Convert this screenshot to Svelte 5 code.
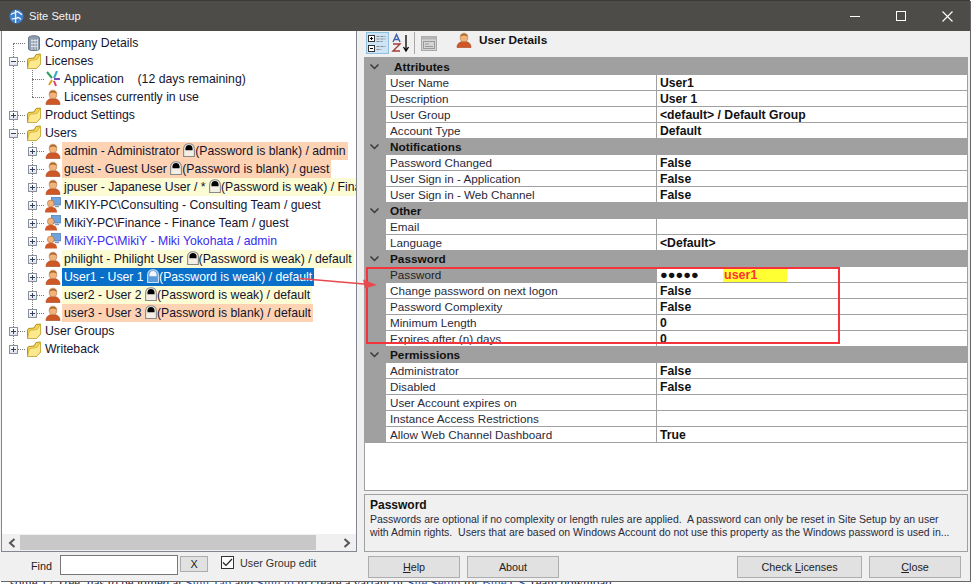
<script>
  const tree = [
    { d: 0, box: '', icon: 'db', t: 'Company Details' },
    { d: 0, box: 'm', icon: 'folder', t: 'Licenses' },
    { d: 1, box: '', icon: 'app', t: 'Application    (12 days remaining)' },
    { d: 1, box: '', icon: 'user', t: 'Licenses currently in use' },
    { d: 0, box: 'p', icon: 'folder', t: 'Product Settings' },
    { d: 0, box: 'm', icon: 'folder', t: 'Users' },
    { d: 1, box: 'p', icon: 'user', a: 'admin - Administrator ', b: '(Password is blank) / admin', c: 'blank' },
    { d: 1, box: 'p', icon: 'user', a: 'guest - Guest User ', b: '(Password is blank) / guest', c: 'blank' },
    { d: 1, box: 'p', icon: 'user', a: 'jpuser - Japanese User / * ', b: '(Password is weak) / Finance Team', c: 'weak' },
    { d: 1, box: 'p', icon: 'win', t: 'MIKIY-PC\\Consulting - Consulting Team / guest' },
    { d: 1, box: 'p', icon: 'win', t: 'MikiY-PC\\Finance - Finance Team / guest' },
    { d: 1, box: 'p', icon: 'win', t: 'MikiY-PC\\MikiY - Miki Yokohata / admin', c: 'self' },
    { d: 1, box: 'p', icon: 'user', a: 'philight - Philight User ', b: '(Password is weak) / default', c: 'weak' },
    { d: 1, box: 'p', icon: 'user', a: 'User1 - User 1 ', b: '(Password is weak) / default', c: 'sel' },
    { d: 1, box: 'p', icon: 'user', a: 'user2 - User 2 ', b: '(Password is weak) / default', c: 'weak' },
    { d: 1, box: 'p', icon: 'user', a: 'user3 - User 3 ', b: '(Password is blank) / default', c: 'blank' },
    { d: 0, box: 'p', icon: 'folder', t: 'User Groups' },
    { d: 0, box: 'p', icon: 'folder', t: 'Writeback' }
  ];
  const sections = [
    { name: 'Attributes', rows: [['User Name', 'User1'], ['Description', 'User 1'], ['User Group', '<default> / Default Group'], ['Account Type', 'Default']] },
    { name: 'Notifications', rows: [['Password Changed', 'False'], ['User Sign in - Application', 'False'], ['User Sign in - Web Channel', 'False']] },
    { name: 'Other', rows: [['Email', ''], ['Language', '<Default>']] },
    { name: 'Password', rows: [['Password', '●●●●●'], ['Change password on next logon', 'False'], ['Password Complexity', 'False'], ['Minimum Length', '0'], ['Expires after (n) days', '0']] },
    { name: 'Permissions', rows: [['Administrator', 'False'], ['Disabled', 'False'], ['User Account expires on', ''], ['Instance Access Restrictions', ''], ['Allow Web Channel Dashboard', 'True']] }
  ];
</script>

{#snippet icon(kind)}
  {#if kind === 'folder'}
    <svg class="ic" viewBox="0 0 16 16"><path d="M1.500 7 L1.500 15.500 L10.500 15.500 L14.500 11 L14.500 1 L10 1.500 L8 5 L2.500 5.500Z" fill="#f7d44f" stroke="#a8922f"/><path d="M1.500 15.500 L3.500 7.500 L11 6.500 L14.500 1 L14.500 11 L10.500 15.500Z" fill="#fbe88f" stroke="#c9aa3a" stroke-width=".7"/></svg>
  {:else if kind === 'db'}
    <svg class="ic" viewBox="0 0 16 16"><path d="M2.500 3 C2.500 0 13.500 0 13.500 3 L13.500 14 C13.500 16 2.500 16 2.500 14Z" fill="#8f9db0" stroke="#6d7684"/><path d="M5 5.500h7M5 8.500h7M5 11.500h7M6 4v11M9 4v11M11.500 4v11" stroke="#e6eaf0" stroke-width=".8"/></svg>
  {:else if kind === 'app'}
    <svg class="ic" viewBox="0 0 16 16"><path d="M2 1 L7 7" stroke="#2e9e5a" stroke-width="2"/><path d="M12 0 L9 7" stroke="#36a8c8" stroke-width="2"/><path d="M9 8 H15" stroke="#7a4bb0" stroke-width="2"/><path d="M7 9 L4 14" stroke="#e0a020" stroke-width="2"/><path d="M9 10 L11 15" stroke="#e03a6a" stroke-width="2"/></svg>
  {:else if kind === 'user'}
    <svg class="ic" viewBox="0 0 16 16"><path d="M1 15.500 C1 10.500 5 9.500 8 9.500 C11 9.500 15 10.500 15 15.500Z" fill="#cf5726" stroke="#a5411e" stroke-width=".6"/><ellipse cx="8" cy="5.500" rx="3.800" ry="4.300" fill="#f2b37a" stroke="#b0763f" stroke-width=".6"/><path d="M4.200 5 C4.500 0.500 11.500 0.500 11.800 5 C10 3 6 3 4.200 5Z" fill="#a8662a"/></svg>
  {:else if kind === 'win'}
    <svg class="ic" viewBox="0 0 16 16"><rect x="6.500" y="0.500" width="9" height="7.500" fill="#6ea3e0" stroke="#4a76ad" stroke-width=".7"/><path d="M10 9.500h4" stroke="#8b95a5" stroke-width="1.400"/><path d="M0 15.500 C0 11 3 10 6 10 C9 10 12 11 12 15.500Z" fill="#cf5726"/><circle cx="5.800" cy="6.500" r="3.400" fill="#f2b37a" stroke="#a8662a" stroke-width=".6"/></svg>
  {/if}
{/snippet}

{#snippet lock()}
  <svg class="lock" viewBox="0 0 11 13"><path class="lk-body" d="M0.500 12.500 V5.500 C0.500 -1 10.500 -1 10.500 5.500 V12.500Z"/><path class="lk-dome" d="M2.200 6.800 V5 C2.200 0.800 8.800 0.800 8.800 5 V6.800Z"/></svg>
{/snippet}

<div class="window">
  <header class="titlebar">
    <svg class="globe" viewBox="0 0 16 16"><circle cx="8" cy="8" r="7.500" fill="#3f7fc9"/><path d="M2 6 C5 3 7 5 8 3 C10 2 11 5 14 6 M3 11 C5 9 8 12 9 9 C11 9 12 11 13 11 M7 1 V15" stroke="#eaf2fb" stroke-width="1.400" fill="none"/></svg>
    <span class="title">Site Setup</span>
    <div class="controls">
      <span class="ctl"><i class="min"></i></span>
      <span class="ctl"><i class="max"></i></span>
      <span class="ctl"><svg width="11" height="11" viewBox="0 0 11 11"><path d="M0.500 0.500 L10.500 10.500 M10.500 0.500 L0.500 10.500" stroke="#fff" stroke-width="1.100"/></svg></span>
    </div>
  </header>

  <div class="body">
    <div class="main">
      <section class="left">
        <div class="tree">
          <div class="vline root"></div>
          <div class="vline lic"></div>
          <div class="vline usr"></div>
          {#each tree as n}
            <div class="node" class:d1={n.d === 1}>
              <span class="box-slot">
                <span class="hdots"></span>
                {#if n.box}<span class="box">{#if n.box === 'p'}<i class="v"></i>{/if}<i class="h"></i></span>{/if}
              </span>
              {@render icon(n.icon)}
              <span class="label {n.c ?? ''}">{#if n.t}{n.t}{:else}{n.a}{@render lock()}{n.b}{/if}</span>
            </div>
          {/each}
        </div>
        <div class="hscroll">
          <svg width="8" height="10" viewBox="0 0 8 10"><path d="M6.500 1 L2 5 L6.500 9" fill="none" stroke="#555" stroke-width="2"/></svg>
          <span class="track"><span class="thumb"></span></span>
          <svg width="8" height="10" viewBox="0 0 8 10"><path d="M1.500 1 L6 5 L1.500 9" fill="none" stroke="#555" stroke-width="2"/></svg>
        </div>
      </section>

      <section class="right">
        <div class="toolbar">
          <span class="tb active">
            <svg width="21" height="20" viewBox="0 0 21 20"><rect x="1.500" y="2.500" width="6" height="6" fill="#fff" stroke="#333"/><path d="M3 5.500h3M4.500 4v3" stroke="#000"/><rect x="1.500" y="12.500" width="6" height="6" fill="#fff" stroke="#333"/><path d="M3 15.500h3" stroke="#000"/><path d="M9.500 3.500h9M9.500 6h9M9.500 8.500h6M9.500 13.500h9M9.500 16.500h5" stroke="#8a8a8a" stroke-dasharray="3 1"/></svg>
          </span>
          <span class="tb az">
            <svg width="20" height="20" viewBox="0 0 20 20"><path d="M15 2 V17 M12.500 14 L15 18 L17.500 14" fill="none" stroke="#000" stroke-width="1.300"/><path d="M2 9 L5.500 1.500 L9 9 M3.500 6.500 H7.500" fill="none" stroke="#3a5fb0" stroke-width="1.400"/><path d="M2 11 H9 L2 18 H9" fill="none" stroke="#a03a3a" stroke-width="1.400"/></svg>
          </span>
          <span class="sep"></span>
          <span class="tb dim">
            <svg width="16" height="15" viewBox="0 0 16 15"><rect x="0.500" y="0.500" width="15" height="14" fill="#d5d5d5" stroke="#a8a8a8"/><rect x="0.500" y="0.500" width="15" height="3" fill="#b5b5b5"/><rect x="2.500" y="5.500" width="11" height="7" fill="none" stroke="#9a9a9a"/><path d="M4 8h4M4 10.500h8" stroke="#9a9a9a"/></svg>
          </span>
          <span class="tb-user">{@render icon('user')}</span>
          <b class="tb-title">User Details</b>
        </div>

        <div class="grid">
          {#each sections as s}
            <div class="sec">
              <span class="chev"><svg width="9" height="6" viewBox="0 0 9 6"><path d="M0.500 0.500 L4.500 4.500 L8.500 0.500" fill="none" stroke="#3a3a3a" stroke-width="1.500"/></svg></span>
              <b class:indent={s.name === 'Attributes'}>{s.name}</b>
            </div>
            {#each s.rows as r}
              {@const isPw = r[0] === 'Password'}
              <div class="row">
                <span class="key" class:hl={isPw}>{r[0]}</span>
                <span class="val">
                  {#if isPw}
                    <span class="dots">{r[1]}</span><span class="note">user1</span>
                  {:else}{r[1]}{/if}
                </span>
              </div>
            {/each}
          {/each}
        </div>

        <div class="desc">
          <b>Password</b>
          <p>Passwords are optional if no complexity or length rules are applied.&nbsp; A password can only be reset in Site Setup by an user<br />with Admin rights.&nbsp; Users that are based on Windows Account do not use this property as the Windows password is used in...</p>
        </div>
      </section>
    </div>

    <footer class="footer">
      <div class="find">
        <label class="findlbl" for="find">Find</label>
        <input id="find" class="findbox" />
        <button class="x">X</button>
        <span class="check"><svg width="11" height="9" viewBox="0 0 11 9"><path d="M1 4.500 L4 7.500 L10 1" fill="none" stroke="#222" stroke-width="1.200"/></svg></span>
        <span class="chk-lbl">User Group edit</span>
      </div>
      <div class="btns">
        <button class="btn"><u>H</u>elp</button>
        <button class="btn about">About</button>
        <button class="btn check-lic">Check <u>L</u>icenses</button>
        <button class="btn"><u>C</u>lose</button>
      </div>
    </footer>
  </div>

  <div class="redbox"></div>
  <svg class="arrow" width="80" height="16" viewBox="0 0 80 16"><path d="M0 1.500 L70 7.500" stroke="#e8484e" stroke-width="1.500"/><path d="M77 8 L63 2.500 L65 11.500Z" fill="#e8484e"/></svg>
</div>
<div class="peek">some 17 Tree, lias to be joined at <span>Sign Tab</span> and <span>Sign to</span> in create a variant of <span>Site Setup</span> for <span>Blue CS</span> Team download</div>

<style>
  :global(body) { margin: 0; background: #fff; overflow: hidden; }
  .window {
    position: relative;
    width: 970px;
    height: 581px;
    background: #f0f0f0;
    font: 12px "Liberation Sans", Arial, sans-serif;
    color: #1a1a1a;
    box-shadow: 1px 1px 0 #666;
    display: flex;
    flex-direction: column;
  }
  .titlebar {
    height: 31px;
    background: #4d4c49;
    color: #fff;
    display: flex;
    align-items: center;
    padding-left: 9px;
    flex: none;
    border-top: 1px solid #3b3a38;
    box-sizing: border-box;
  }
  .globe { width: 15px; height: 15px; }
  .title { margin-left: 5px; font-size: 11.200px; color: #f4f4f4; }
  .controls { margin-left: auto; display: flex; }
  .ctl { width: 46px; height: 30px; display: flex; align-items: center; justify-content: center; }
  .min { width: 10px; height: 1px; background: #fff; display: block; }
  .max { width: 8px; height: 8px; border: 1px solid #fff; display: block; }
  .body { flex: 1; display: flex; flex-direction: column; min-height: 0; }
  .main { flex: 1; display: flex; min-height: 0; padding-left: 1px; }
  .left {
    width: 356px;
    box-sizing: border-box;
    height: 521px;
    border: 1px solid #828790;
    border-top: 0;
    background: #fff;
    display: flex;
    flex-direction: column;
    margin-right: 7px;
  }
  .tree { flex: 1; padding-top: 3px; overflow: hidden; position: relative; }
  .vline { position: absolute; width: 0; border-left: 1px dotted #777; }
  .root { left: 11px; top: 12px; height: 306px; }
  .lic { left: 30px; top: 39px; height: 27px; }
  .usr { left: 30px; top: 109px; height: 173px; }
  .node { height: 18px; display: flex; align-items: center; white-space: nowrap; position: relative; padding-left: 7px; }
  .node.d1 { padding-left: 26px; }
  .box-slot { width: 16px; display: flex; align-items: center; position: relative; height: 18px; flex: none; }
  .hdots { position: absolute; left: 4px; width: 12px; border-top: 1px dotted #777; }
  .box {
    position: relative;
    box-sizing: border-box;
    width: 9px;
    height: 9px;
    background: linear-gradient(#fff, #dfe3ea);
    border: 1px solid #8a919c;
  }
  .box i { position: absolute; background: #33415c; display: block; }
  .box .h { left: 1px; top: 3px; width: 5px; height: 1px; }
  .box .v { left: 3px; top: 1px; width: 1px; height: 5px; }
  .ic { width: 16px; height: 16px; flex: none; margin-left: 1px; }
  .label { margin-left: 1px; padding: 0 2px; height: 18px; line-height: 18px; white-space: pre; font-size: 12.250px; color: #14142e; }
  .label.blank { background: #fdd3b4; }
  .label.weak { background: #fbfbd4; }
  .label.sel { background: #0a6fc8; color: #fff; }
  .label.self { color: #3a2cf0; }
  .lock { width: 12px; height: 14px; vertical-align: -2px; }
  .lk-body { fill: #f4efe6; stroke: #888; }
  .lk-dome { fill: #000; }
  .sel .lk-body { fill: #5b9bdc; stroke: #cfe2f5; }
  .sel .lk-dome { fill: #f2f7fc; }
  .hscroll { height: 17px; background: #f0f0f0; display: flex; align-items: center; padding: 0 5px 0 6px; flex: none; }
  .track { flex: 1; height: 15px; margin: 0 4px; display: block; }
  .thumb { display: block; width: 296px; height: 15px; background: #c8c8c8; }
  .right { flex: 1; display: flex; flex-direction: column; min-width: 0; height: 521px; margin-right: 2px; }
  .toolbar { height: 26px; flex: none; display: flex; align-items: center; padding-left: 2px; box-sizing: border-box; padding-bottom: 2px; }
  .tb { display: flex; align-items: center; justify-content: center; height: 22px; box-sizing: border-box; }
  .tb.active { width: 23px; background: #cde4f7; border: 1px solid #92c0e0; }
  .tb.az { width: 24px; }
  .sep { width: 1px; height: 22px; background: #a8a8a8; margin: 0 6px 0 1px; }
  .tb.dim { width: 16px; }
  .tb-user { margin-left: 18px; width: 17px; display: flex; margin-top: -6px; }
  .tb-title { margin-left: 7px; font-size: 11.800px; color: #111; margin-top: -7px; }
  .grid {
    height: 434px;
    box-sizing: border-box;
    flex: none;
    background: #fff;
    border: 1px solid #a0a0a0;
    border-top-width: 2px;
  }
  .sec { height: 16px; background: #a0a0a0; display: flex; align-items: center; font-size: 11.800px; color: #111; }
  .sec b { margin-left: 9px; }
  .sec b.indent { margin-left: 13px; }
  .chev { width: 16px; padding-left: 5px; box-sizing: border-box; display: flex; }
  .row { height: 16px; display: grid; grid-template-columns: 271px 1fr; background: #a0a0a0; padding-left: 21px; }
  .key, .val { background: #fff; border-bottom: 1px solid #a0a0a0; line-height: 15px; height: 16px; box-sizing: border-box; padding-left: 4px; font-size: 11.700px; overflow: hidden; white-space: nowrap; }
  .key { border-right: 1px solid #a0a0a0; color: #2a2a3a; }
  .key.hl { background: #a0a0a0; color: #222; }
  .val { font-weight: 700; font-size: 12.200px; line-height: 16px; color: #111; padding-left: 3px; display: flex; }
  .dots { font-size: 12.800px; width: 63px; flex: none; }
  .note { background: #ffff33; color: #f33; width: 64px; padding-left: 1px; box-sizing: border-box; font-size: 12.500px; }
  .desc {
    margin-top: 3px;
    height: 59px;
    box-sizing: border-box;
    border: 1px solid #a0a0a0;
    padding: 3px 5px;
    font-size: 10.500px;
    line-height: 13px;
    color: #2a2a3a;
    overflow: hidden;
  }
  .desc b { display: block; font-size: 12px; color: #111; line-height: 14px; margin-bottom: 1px; }
  .desc p { margin: 0; white-space: nowrap; }
  .footer { height: 29px; flex: none; display: flex; }
  .find { width: 368px; display: flex; align-items: flex-start; flex: none; }
  .findlbl { margin: 8px 0 0 31px; width: 20px; font-size: 10.800px; color: #222; }
  .findbox { width: 118px; height: 20px; box-sizing: border-box; margin: 3px 0 0 9px; border: 1px solid #777; background: #fff; padding: 0; }
  .x { width: 28px; height: 16px; margin: 4px 0 0 2px; box-sizing: border-box; border: 1px solid #adadad; background: #e1e1e1; padding: 0; font: 10.800px "Liberation Sans", Arial, sans-serif; color: #222; }
  .check { width: 13px; height: 13px; box-sizing: border-box; border: 1px solid #333; background: #fff; margin: 4px 0 0 13px; display: flex; align-items: center; justify-content: center; }
  .chk-lbl { margin: 5px 0 0 6px; font-size: 10.800px; color: #333; }
  .btns { flex: 1; display: flex; padding-top: 4px; }
  .btn { width: 92px; height: 22px; box-sizing: border-box; background: #e1e1e1; border: 1px solid #adadad; padding: 0; font: 10.800px "Liberation Sans", Arial, sans-serif; color: #222; margin-right: 7px; }
  .btn.about { margin-right: 178px; }
  .btn.check-lic { width: 125px; }
  .redbox { position: absolute; left: 366px; top: 267px; width: 474px; height: 77px; box-sizing: border-box; border: 2px solid #f4333a; }
  .arrow { position: absolute; left: 300px; top: 277px; overflow: visible; }
  .peek { height: 3px; overflow: hidden; font: 13px/3px "Liberation Serif", serif; color: #223; white-space: nowrap; padding-left: 10px; }
  .peek span { color: #2a4fa8; }
</style>
